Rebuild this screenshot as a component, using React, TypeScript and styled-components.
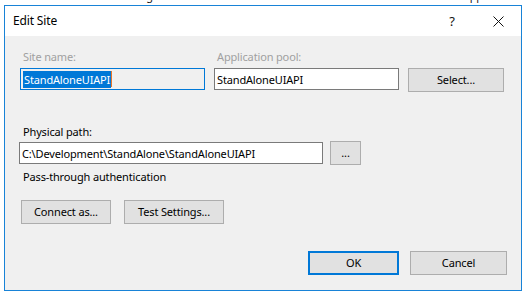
import styled, { createGlobalStyle } from 'styled-components';

const GlobalStyle = createGlobalStyle`
    html, body {
        margin: 0;
        padding: 0;
        background: #ffffff;
    }
    body {
        width: 526px;
        height: 296px;
        overflow: hidden;
        font-family: "Noto Sans", "Open Sans", sans-serif;
        font-size: 11px;
        letter-spacing: -0.15px;
        color: #000;
    }
`;

const Desktop = styled.div`
    position: relative;
    width: 526px;
    height: 296px;
    overflow: hidden;
    background: #fff;
`;

// feature labels of the IIS window behind the dialog, only their bottoms show
const BehindRow = styled.div`
    display: flex;
    gap: 38px;
    padding-left: 24px;
    margin-top: -12px;
    font-size: 11px;
    line-height: 16px;
    color: #1a1a1a;
    white-space: nowrap;
`;

const Dialog = styled.div`
    position: absolute;
    left: 4px;
    top: 5px;
    width: 516px;
    height: 284px;
    border: 1px solid #1883d7;
    background: #f0f0f0;
    display: flex;
    flex-direction: column;
`;

const TitleBar = styled.div`
    height: 30px;
    background: #fff;
    display: flex;
    align-items: center;
    padding-left: 8px;
`;

const Title = styled.div`
    flex: 1;
    font-size: 12px;
    padding-bottom: 1px;
`;

const TitleButton = styled.div`
    width: 46px;
    height: 30px;
    display: flex;
    align-items: center;
    justify-content: center;
    font-size: 13px;
    color: #111;
`;

const Body = styled.div`
    flex: 1;
    display: flex;
    flex-direction: column;
    padding: 12px 15px 0 15px;
`;

const TopGrid = styled.div`
    display: grid;
    grid-template-columns: 185px 185px 96px;
    column-gap: 9px;
    row-gap: 3px;
    align-items: start;
`;

const Label = styled.div<{ $disabled?: boolean }>`
    line-height: 17px;
    padding-left: 3px;
    color: ${(p) => (p.$disabled ? '#a0a0a0' : '#000')};
`;

const TextBox = styled.div<{ $focused?: boolean; $disabled?: boolean; $width?: number }>`
    box-sizing: border-box;
    height: 22px;
    width: ${(p) => (p.$width ? `${p.$width}px` : 'auto')};
    border: 1px solid ${(p) => (p.$focused ? '#0078d7' : '#7a7a7a')};
    background: ${(p) => (p.$disabled ? '#f0f0f0' : '#fff')};
    display: flex;
    align-items: center;
    padding-left: 2px;
    white-space: nowrap;
    overflow: hidden;
`;

const Selected = styled.span`
    background: #0078d7;
    color: #fff;
    line-height: 17px;
    padding: 0 1px;
`;

const Caret = styled.span`
    display: inline-block;
    width: 1px;
    height: 16px;
    background: #e8762a;
`;

const Button = styled.div<{ $width: number; $default?: boolean }>`
    box-sizing: border-box;
    width: ${(p) => p.$width}px;
    height: 24px;
    background: #e1e1e1;
    border: ${(p) => (p.$default ? '2px solid #0078d7' : '1px solid #adadad')};
    display: flex;
    align-items: center;
    justify-content: center;
    padding-bottom: 1px;
`;

const PathLabel = styled(Label)`
    margin-top: 31px;
    margin-bottom: 1px;
`;

const PathRow = styled.div`
    display: flex;
    align-items: center;
    gap: 7px;
    margin-left: -1px;
`;

const Note = styled.div`
    margin-top: 3px;
    padding-left: 3px;
    line-height: 17px;
`;

const ButtonRow = styled.div`
    display: flex;
    gap: 13px;
    padding-left: 1px;
    margin-top: 15px;
`;

const Footer = styled.div`
    display: flex;
    justify-content: flex-end;
    gap: 11px;
    margin-top: 27px;
    margin-right: -1px;
`;

export default function App() {
    return (
        <>
            <GlobalStyle />
            <Desktop>
                <BehindRow>
                    <span>.NET</span>
                    <span>.NET Profiling</span>
                    <span>.NET Roles</span>
                    <span>.NET Trust</span>
                    <span>.NET Users</span>
                    <span>Application</span>
                    <span>Connection</span>
                </BehindRow>
                <Dialog>
                    <TitleBar>
                        <Title>Edit Site</Title>
                        <TitleButton>?</TitleButton>
                        <TitleButton>
                            <svg width="11" height="11" viewBox="0 0 11 11">
                                <path d="M0.5 0.5 L10.5 10.5 M10.5 0.5 L0.5 10.5" stroke="#111" strokeWidth="1" />
                            </svg>
                        </TitleButton>
                    </TitleBar>
                    <Body>
                        <TopGrid>
                            <Label $disabled>Site name:</Label>
                            <Label $disabled>Application pool:</Label>
                            <div />
                            <TextBox $focused $disabled>
                                <Selected>StandAloneUIAPI</Selected>
                                <Caret />
                            </TextBox>
                            <TextBox>StandAloneUIAPI</TextBox>
                            <Button $width={96}>Select...</Button>
                        </TopGrid>
                        <PathLabel>Physical path:</PathLabel>
                        <PathRow>
                            <TextBox $width={304}>C:\Development\StandAlone\StandAloneUIAPI</TextBox>
                            <Button $width={31}>...</Button>
                        </PathRow>
                        <Note>Pass-through authentication</Note>
                        <ButtonRow>
                            <Button $width={90}>Connect as...</Button>
                            <Button $width={100}>Test Settings...</Button>
                        </ButtonRow>
                        <Footer>
                            <Button $width={91} $default>OK</Button>
                            <Button $width={97}>Cancel</Button>
                        </Footer>
                    </Body>
                </Dialog>
            </Desktop>
        </>
    );
}
